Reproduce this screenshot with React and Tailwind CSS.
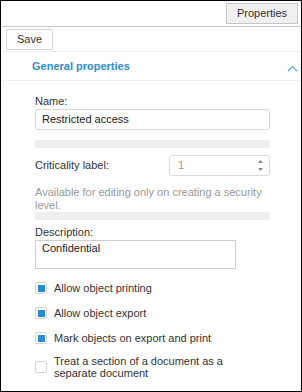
import React from 'react';

const font = "font-['Liberation_Sans',Arial,sans-serif]";

const Check = ({ checked, children }) => (
  <div className="flex items-center gap-[7px]">
    <span className="w-[12px] h-[12px] shrink-0 border border-[#d4d4d4] rounded-[2px] bg-white flex items-center justify-center">
      {checked && <span className="w-[7px] h-[7px] bg-[#2b8ad0]" />}
    </span>
    <span className="leading-[12px] w-[190px]">{children}</span>
  </div>
);

export default function App() {
  return (
    <div className={`w-[302px] h-[392px] border border-black bg-white text-[11px] text-[#333] overflow-hidden flex flex-col ${font}`}>
      {/* top toolbar */}
      <div className="h-[26px] shrink-0 border-b border-[#c8c8c8] flex justify-end items-start pt-[2px] pr-[3px]">
        <button className="h-[21px] w-[72px] bg-[#f0f0f0] border border-[#c6c6c6] text-[#333] leading-[19px]">
          Properties
        </button>
      </div>

      {/* action row */}
      <div className="h-[25px] shrink-0 border-b border-[#eeeeee] pt-[2px] pl-[5px]">
        <button className="h-[21px] w-[47px] bg-white border border-[#d6d6d6] rounded-[2px] text-[#333] leading-[19px]">
          Save
        </button>
      </div>

      {/* section header */}
      <div className="h-[29px] shrink-0 border-b border-[#eeeeee] flex items-center justify-between pl-[31px] pr-[3px]">
        <span className="font-bold text-[#2d8dd5] mt-[1px]">General properties</span>
        <svg width="11" height="7" viewBox="0 0 11 7" className="mt-[5px]">
          <path d="M1 6 L5.5 1.5 L10 6" fill="none" stroke="#5fa8dd" strokeWidth="1.2" />
        </svg>
      </div>

      {/* form */}
      <div className="flex flex-col pl-[34px] w-[269px] pt-[14px]">
        <label className="leading-[13px]">Name:</label>
        <div className="mt-[1px] h-[21px] border border-[#d8d8d8] rounded-[3px] px-[6px] flex items-center text-[#222]">
          Restricted access
        </div>

        <div className="mt-[10px] h-[8px] bg-[#eeeeee]" />

        <div className="mt-[7px] flex items-center justify-between">
          <span>Criticality label:</span>
          <div className="w-[101px] h-[21px] border border-[#dcdcdc] rounded-[3px] flex items-center justify-between pl-[8px] pr-[5px] text-[#9a9a9a]">
            <span>1</span>
            <svg width="7" height="13" viewBox="0 0 7 13">
              <path d="M3.5 1 L6 4 L1 4 Z" fill="#8a8a8a" />
              <path d="M1 9 L6 9 L3.5 12 Z" fill="#8a8a8a" />
            </svg>
          </div>
        </div>

        <p className="mt-[10px] leading-[13px] text-[#999]">
          Available for editing only on creating a security level.
        </p>

        <div className="h-[8px] bg-[#eeeeee]" />

        <label className="mt-[6px] leading-[13px]">Description:</label>
        <div className="mt-[1px] w-[201px] h-[29px] border border-[#cfcfcf] px-[6px] pt-[1px] leading-[13px] text-[#222]">
          Confidential
        </div>

        <div className="mt-[13px] flex flex-col gap-[13px]">
          <Check checked>Allow object printing</Check>
          <Check checked>Allow object export</Check>
          <Check checked>Mark objects on export and print</Check>
          <div className="mt-[-2px]">
            <Check>Treat a section of a document as a separate document</Check>
          </div>
        </div>
      </div>
    </div>
  );
}
